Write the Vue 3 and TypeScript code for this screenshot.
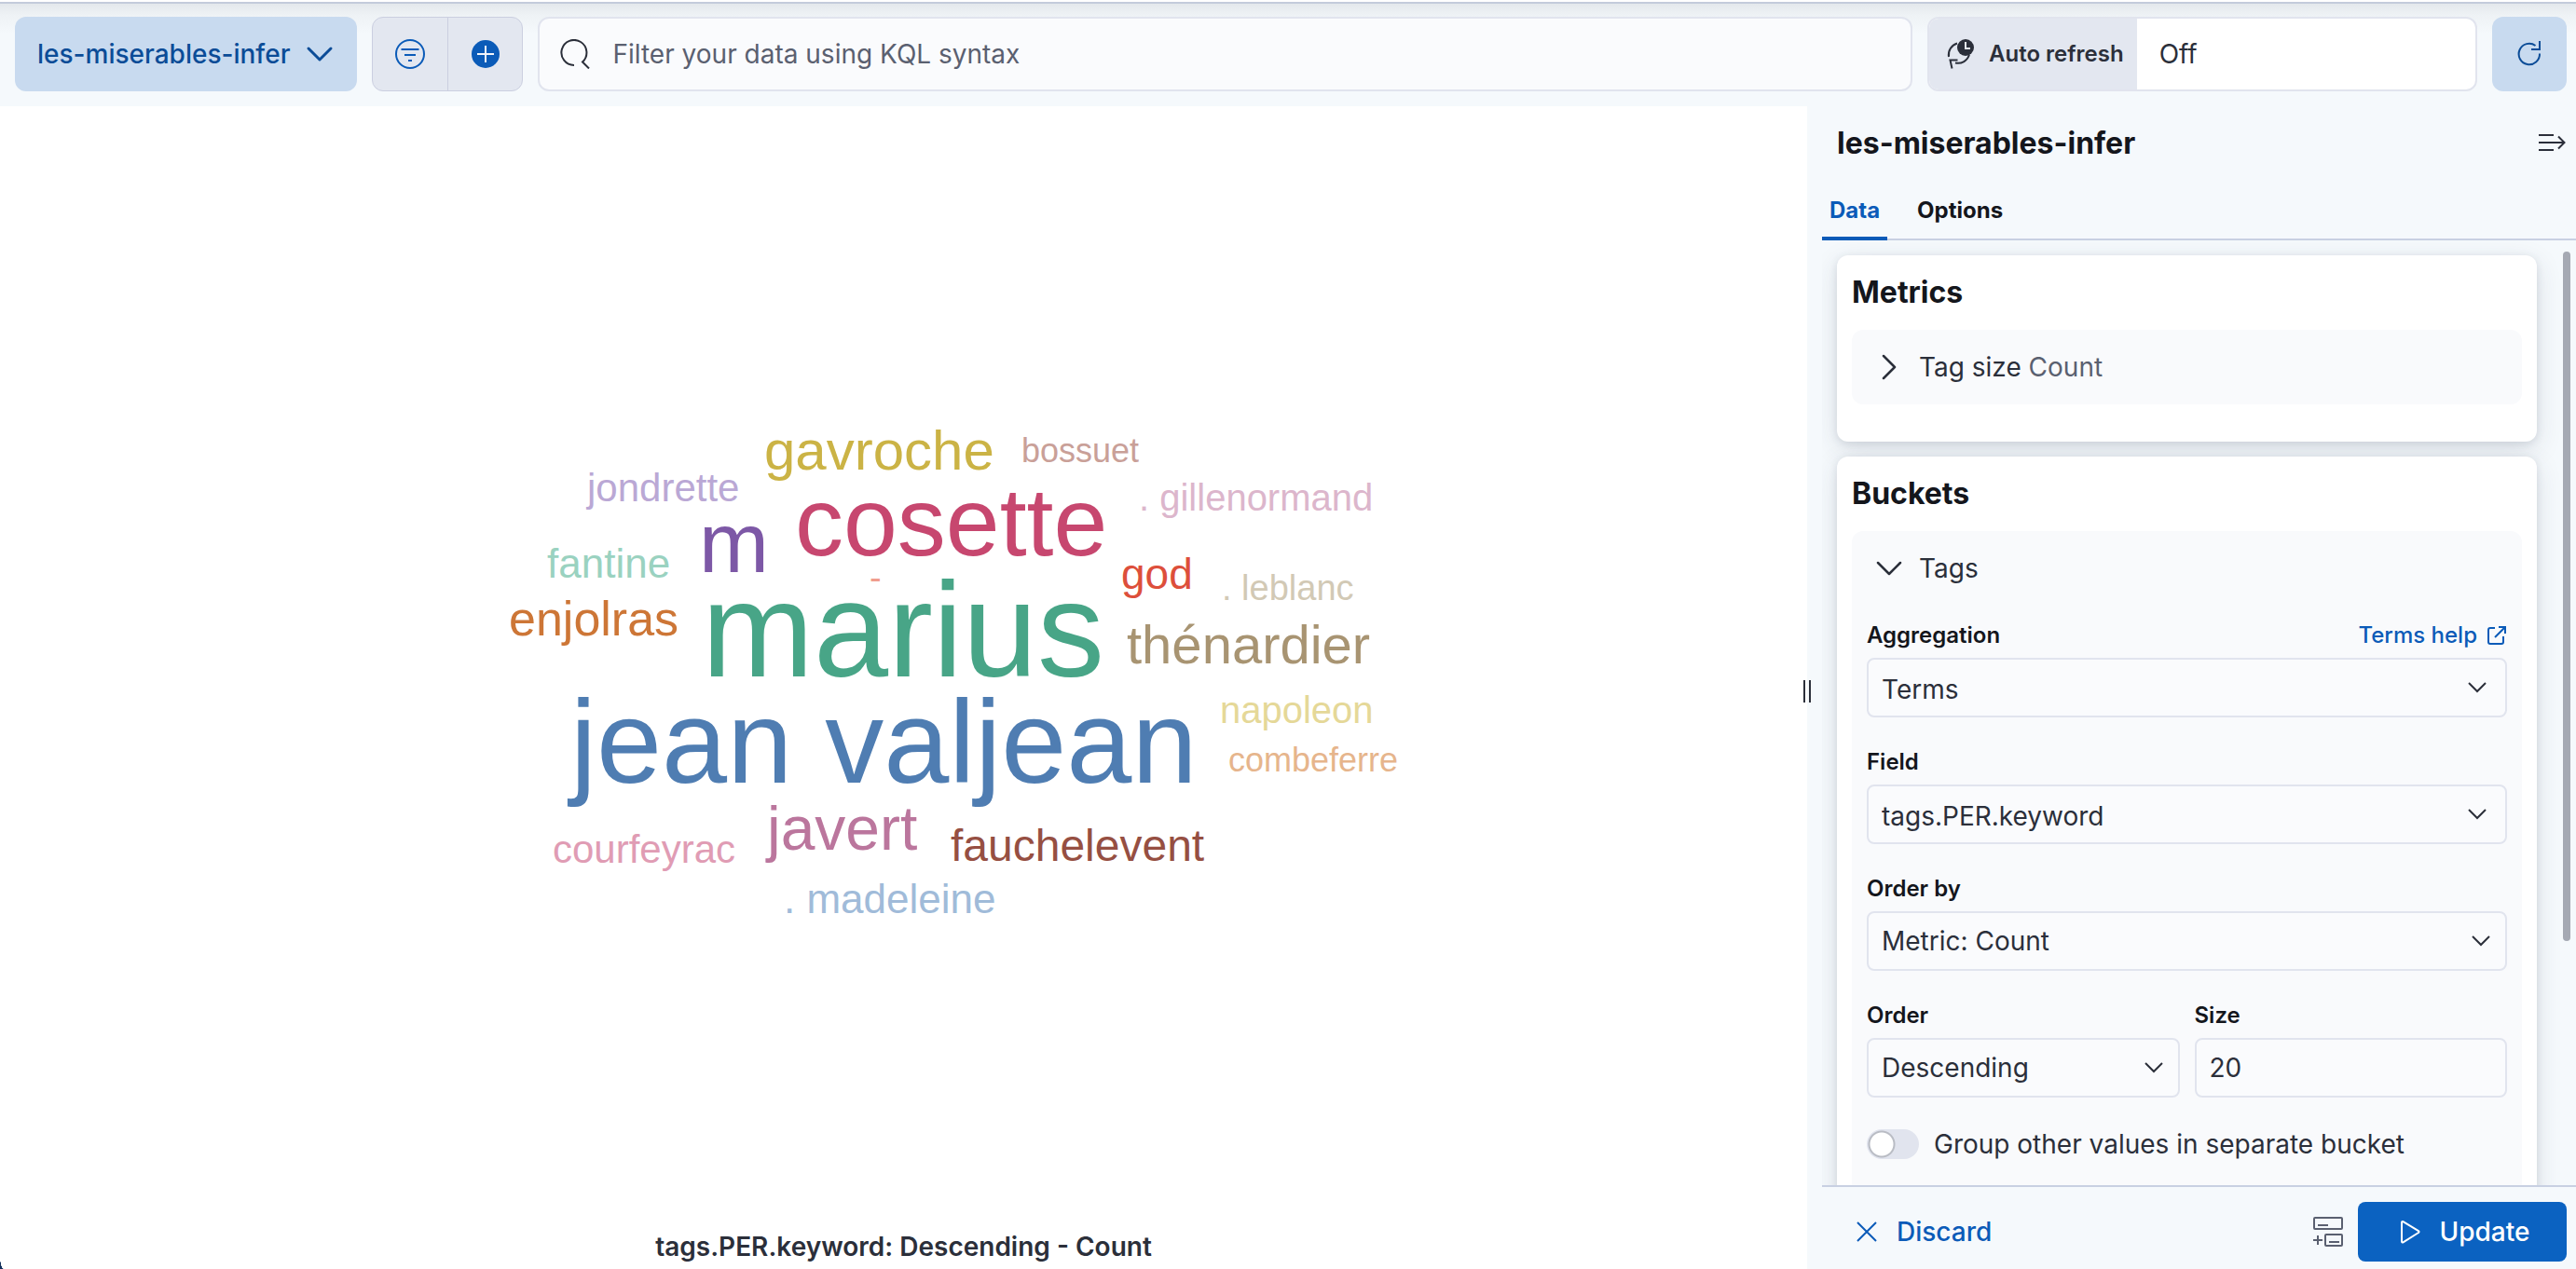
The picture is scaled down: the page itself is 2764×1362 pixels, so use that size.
<script setup lang="ts">
import { ref } from 'vue'

interface Word {
  text: string
  x: number
  y: number
  size: number
  color: string
}

const words: Word[] = [
  { text: 'marius', x: 323, y: 288, size: 144, color: '#48a587' },
  { text: 'jean valjean', x: 182, y: 402, size: 126, color: '#4f7db2' },
  { text: 'cosette', x: 423, y: 158, size: 104, color: '#c7476f' },
  { text: 'm', x: 320, y: 176, size: 90, color: '#7d58a6' },
  { text: 'javert', x: 393, y: 474, size: 66, color: '#bb769d' },
  { text: 'gavroche', x: 390, y: 66, size: 60, color: '#cbb345' },
  { text: 'thénardier', x: 779, y: 274, size: 58, color: '#a89472' },
  { text: 'enjolras', x: 116, y: 244, size: 52, color: '#cd7636' },
  { text: 'fauchelevent', x: 590, y: 486, size: 48, color: '#964f42' },
  { text: 'god', x: 773, y: 194, size: 46, color: '#dd4f3b' },
  { text: '. madeleine', x: 411, y: 542, size: 44, color: '#a0bbd9' },
  { text: 'fantine', x: 157, y: 182, size: 44, color: '#9ad2c0' },
  { text: 'courfeyrac', x: 163, y: 488, size: 42, color: '#e09cb4' },
  { text: 'jondrette', x: 200, y: 100, size: 42, color: '#baa8d5' },
  { text: '. gillenormand', x: 792, y: 110, size: 40, color: '#dcb6cc' },
  { text: 'napoleon', x: 879, y: 338, size: 40, color: '#e5d898' },
  { text: '. leblanc', x: 881, y: 206, size: 38, color: '#d2c9b5' },
  { text: '-', x: 503, y: 195, size: 38, color: '#f09d8e' },
  { text: 'bossuet', x: 666, y: 58, size: 36, color: '#c9a098' },
  { text: 'combeferre', x: 888, y: 390, size: 36, color: '#e6b58c' },
]

const query = ref('')
const interval = ref('Off')
const size = ref('20')
const groupOther = ref(false)
</script>

<template>
  <div class="app">
    <header class="toolbar">
      <button class="dataview" type="button">
        les-miserables-infer
        <svg width="32" height="32" viewBox="0 0 32 32" fill="none" stroke="currentColor" stroke-width="3" stroke-linecap="round" stroke-linejoin="round"><path d="M4 10l12 12 12-12" /></svg>
      </button>
      <div class="filter-group">
        <button type="button" aria-label="Saved query menu">
          <svg width="32" height="32" viewBox="0 0 32 32" fill="none" stroke="currentColor" stroke-width="2"><circle cx="16" cy="16" r="15" /><path d="M6.500 11h19M10 17h12M14 23h4" /></svg>
        </button>
        <button type="button" aria-label="Add filter">
          <svg width="30" height="30" viewBox="0 0 30 30"><circle cx="15" cy="15" r="15" fill="currentColor" /><path d="M15 6v18M6 15h18" stroke="#f2f5fa" stroke-width="2" /></svg>
        </button>
      </div>
      <label class="search">
        <svg width="32" height="32" viewBox="0 0 32 32" fill="none" stroke="currentColor" stroke-width="2"><path d="M15 28A13.500 13.500 0 1 1 24 24.500l7 7" /></svg>
        <input v-model="query" type="text" aria-label="Query" placeholder="Filter your data using KQL syntax" />
      </label>
      <div class="auto-refresh">
        <label for="interval">
          <svg width="32" height="32" viewBox="0 0 32 32" fill="none" stroke="currentColor" stroke-width="2"><path d="M12 4.500A13 13 0 0 0 3 19M12.500 22.500h-8l2 9M10 25.500A12.500 12.500 0 0 0 25 16.500" /><circle cx="21" cy="9" r="9" fill="currentColor" stroke="none" /><path d="M21 3v7h5" stroke="#e3e7f0" /></svg>
          Auto refresh
        </label>
        <input id="interval" v-model="interval" type="text" />
      </div>
      <button class="refresh" type="button" aria-label="Refresh">
        <svg width="32" height="32" viewBox="0 0 32 32" fill="none" stroke="currentColor" stroke-width="2"><path d="M22.500 7A11.200 11.200 0 1 0 27 15.500M27 2v9h-9" /></svg>
      </button>
    </header>

    <div class="body">
      <main class="viz">
        <div class="cloud">
          <svg viewBox="0 0 1080 560" role="img" aria-label="Tag cloud">
            <text v-for="w in words" :key="w.text" :x="w.x" :y="w.y" :font-size="w.size" :fill="w.color">{{ w.text }}</text>
          </svg>
        </div>
        <p class="caption">tags.PER.keyword: Descending - Count</p>
        <span class="corner"></span>
      </main>

      <aside class="sidebar">
        <span class="handle"></span>
        <div class="title-row">
          <h2>les-miserables-infer</h2>
          <button type="button" class="plain" aria-label="Collapse sidebar">
            <svg width="32" height="32" viewBox="0 0 32 32" fill="none" stroke="currentColor" stroke-width="2"><path d="M2 7h16M2 15h28M2 23h16M23 8.500l6.500 6.500-6.500 6.500" /></svg>
          </button>
        </div>
        <div class="tabs" role="tablist">
          <button type="button" role="tab" aria-selected="true" class="active">Data</button>
          <button type="button" role="tab" aria-selected="false">Options</button>
        </div>

        <div class="scroll">
          <section class="card metrics">
            <h3>Metrics</h3>
            <div class="group">
              <button type="button" class="accordion">
                <svg width="32" height="32" viewBox="0 0 32 32" fill="none" stroke="currentColor" stroke-width="2.500" stroke-linecap="round" stroke-linejoin="round"><path d="M10 4l12 12-12 12" /></svg>
                <span>Tag size <em>Count</em></span>
              </button>
            </div>
          </section>

          <section class="card">
            <h3>Buckets</h3>
            <div class="group">
              <button type="button" class="accordion">
                <svg width="32" height="32" viewBox="0 0 32 32" fill="none" stroke="currentColor" stroke-width="2.500" stroke-linecap="round" stroke-linejoin="round"><path d="M4 10l12 12 12-12" /></svg>
                <span>Tags</span>
              </button>
              <div class="form">
                <div class="field">
                  <div class="label-row">
                    <label for="agg">Aggregation</label>
                    <a href="#">Terms help
                      <svg width="24" height="24" viewBox="0 0 24 24" fill="none" stroke="currentColor" stroke-width="2"><path d="M11 4H6a2 2 0 0 0-2 2v13a2 2 0 0 0 2 2h12a2 2 0 0 0 2-2v-6M15 3h7v7M21.500 3.500 11 14" /></svg>
                    </a>
                  </div>
                  <div class="select combo">
                    <select id="agg"><option>Terms</option></select>
                    <svg width="24" height="24" viewBox="0 0 24 24"><path d="M3 7l9 9 9-9" /></svg>
                  </div>
                </div>
                <div class="field">
                  <div class="label-row"><label for="fld">Field</label></div>
                  <div class="select combo">
                    <select id="fld"><option>tags.PER.keyword</option></select>
                    <svg width="24" height="24" viewBox="0 0 24 24"><path d="M3 7l9 9 9-9" /></svg>
                  </div>
                </div>
                <div class="field">
                  <div class="label-row"><label for="orderby">Order by</label></div>
                  <div class="select">
                    <select id="orderby"><option>Metric: Count</option></select>
                    <svg width="24" height="24" viewBox="0 0 24 24"><path d="M3 7l9 9 9-9" /></svg>
                  </div>
                </div>
                <div class="pair">
                  <div class="field">
                    <div class="label-row"><label for="order">Order</label></div>
                    <div class="select">
                      <select id="order"><option>Descending</option></select>
                      <svg width="24" height="24" viewBox="0 0 24 24"><path d="M3 7l9 9 9-9" /></svg>
                    </div>
                  </div>
                  <div class="field">
                    <div class="label-row"><label for="size">Size</label></div>
                    <input id="size" v-model="size" type="text" />
                  </div>
                </div>
                <label class="switch">
                  <input v-model="groupOther" type="checkbox" role="switch" />
                  Group other values in separate bucket
                </label>
              </div>
            </div>
          </section>
          <span class="thumb"></span>
        </div>

        <footer class="actions">
          <button type="button" class="discard">
            <svg width="32" height="32" viewBox="0 0 32 32" fill="none" stroke="currentColor" stroke-width="2"><path d="M6 6l20 20M26 6 6 26" /></svg>
            Discard
          </button>
          <button type="button" class="plain auto-apply" aria-label="Auto apply">
            <svg width="32" height="32" viewBox="0 0 32 32" fill="none" stroke="currentColor" stroke-width="2"><rect x="1" y="1" width="30" height="12" rx="1" /><path d="M5 9h11M0 25h10M5 20v10M17 27h11" /><rect x="13" y="19" width="18" height="12" rx="1" /></svg>
          </button>
          <button type="button" class="update">
            <svg width="32" height="32" viewBox="0 0 32 32" fill="none" stroke="currentColor" stroke-width="2" stroke-linejoin="round"><path d="M7 6v20.500a1 1 0 0 0 1.500.900L25 17a1 1 0 0 0 0-1.800L8.500 5.100A1 1 0 0 0 7 6z" /></svg>
            Update
          </button>
        </footer>
      </aside>
    </div>
  </div>
</template>

<style>
body {
  margin: 0;
  background: #fff;
}
</style>

<style scoped>
* {
  box-sizing: border-box;
}
.app {
  height: 100vh;
  display: flex;
  flex-direction: column;
  overflow: hidden;
  font-family: Inter, "Liberation Sans", sans-serif;
  font-size: 28px;
  line-height: 40px;
  color: #2b2f3a;
}
button,
input,
select {
  font: inherit;
  color: inherit;
  margin: 0;
}
button {
  border: 0;
  background: none;
  padding: 0;
  display: flex;
  align-items: center;
  justify-content: center;
}
svg {
  flex: none;
}
h2,
h3,
p {
  margin: 0;
}
.toolbar {
  flex: none;
  display: flex;
  gap: 16px;
  margin-top: 2px;
  padding: 14px 10px 16px 16px;
  border-top: 2px solid #c3cbdb;
  background: linear-gradient(#e4e8ec, #eef2f5 12px, #f5f9fc 32px);
}
.toolbar > * {
  height: 80px;
  border-radius: 12px;
}
.dataview {
  gap: 16px;
  padding: 0 24px;
  font-weight: 500;
  color: #0b4c97;
  background: #c8daef;
}
.filter-group {
  display: flex;
  width: 162px;
  border: 1px solid #cbcfe0;
  background: #e3e7f0;
  color: #0b5bb8;
}
.filter-group button {
  flex: 1;
}
.filter-group button + button {
  border-left: 1px solid #cbcfe0;
}
.search {
  flex: 1;
  display: flex;
  align-items: center;
  gap: 24px;
  padding: 0 22px;
  border: 2px solid #e1e4ee;
  background: #fafbfd;
}
.search input {
  flex: 1;
  border: 0;
  padding: 0;
  background: none;
  outline: none;
}
.search input::placeholder {
  color: #5a6070;
  opacity: 1;
}
.auto-refresh {
  display: flex;
  width: 590px;
  border: 2px solid #e1e4ee;
  background: #fff;
  overflow: hidden;
}
.auto-refresh label {
  flex: none;
  display: flex;
  align-items: center;
  gap: 14px;
  padding: 0 14px 0 18px;
  font-size: 24px;
  font-weight: 600;
  background: #e3e7f0;
}
.auto-refresh input {
  flex: 1;
  min-width: 0;
  border: 0;
  padding: 0 24px;
  background: none;
}
.refresh {
  width: 80px;
  color: #0b4c97;
  background: #c8daef;
}
.body {
  flex: 1;
  min-height: 0;
  display: flex;
}
.viz {
  position: relative;
  flex: 1;
  min-width: 0;
  display: flex;
  flex-direction: column;
}
.cloud {
  flex: 1;
  min-height: 0;
  display: flex;
  align-items: center;
  justify-content: center;
}
.cloud svg {
  width: 1080px;
  max-width: 100%;
  flex: 0 1 auto;
  font-family: "Liberation Sans", Arial, sans-serif;
}
.caption {
  padding-bottom: 8px;
  line-height: 32px;
  font-size: 28px;
  font-weight: 600;
  text-align: center;
}
.corner {
  position: absolute;
  left: 0;
  bottom: 0;
  width: 4px;
  height: 14px;
  background: radial-gradient(ellipse at 100% 0, transparent 68%, #12305c 72%);
}
.sidebar {
  position: relative;
  flex: none;
  width: clamp(640px, 30vw, 825px);
  padding-left: 16px;
  display: flex;
  flex-direction: column;
  background: #f5f9fc;
}
.handle {
  position: absolute;
  left: -4px;
  top: 616px;
  width: 8px;
  height: 24px;
  border: solid #2b2f3a;
  border-width: 0 2px;
}
.title-row {
  flex: none;
  display: flex;
  justify-content: space-between;
  align-items: center;
  height: 80px;
  padding: 0 10px 0 16px;
}
h2,
h3 {
  font-size: 32px;
  line-height: 40px;
  font-weight: 700;
  color: #14161c;
}
.tabs {
  flex: none;
  display: flex;
  gap: 24px;
  height: 64px;
  border-bottom: 2px solid #c8d0e2;
}
.tabs button {
  height: 64px;
  padding: 0 8px;
  font-size: 24px;
  font-weight: 700;
  color: #14161c;
}
.tabs .active {
  color: #0b5bb8;
  border-bottom: 4px solid #0b5bb8;
  padding-top: 4px;
}
.scroll {
  position: relative;
  flex: 1;
  min-height: 0;
  overflow: hidden;
  padding: 16px 42px 16px 16px;
}
.thumb {
  position: absolute;
  right: 6px;
  top: 12px;
  width: 8px;
  height: 73%;
  border-radius: 4px;
  background: #a5a9b3;
}
.card {
  padding: 20px 16px 16px;
  border-radius: 12px;
  background: #fff;
  box-shadow: 0 2px 8px rgba(43, 57, 79, 0.12), 0 8px 28px rgba(43, 57, 79, 0.13);
}
.card + .card {
  margin-top: 16px;
}
.metrics {
  padding-bottom: 40px;
}
.group {
  margin-top: 20px;
  border-radius: 12px;
  background: #f9fafc;
}
.accordion {
  width: 100%;
  height: 80px;
  padding: 0 24px;
  gap: 16px;
  justify-content: flex-start;
}
.accordion em {
  font-style: normal;
  color: #5a6070;
}
.form {
  padding: 16px 16px 64px;
  display: flex;
  flex-direction: column;
  gap: 32px;
}
.label-row {
  display: flex;
  justify-content: space-between;
  height: 40px;
  line-height: 32px;
  font-size: 24px;
  font-weight: 600;
  color: #14161c;
}
.label-row a {
  display: flex;
  align-items: center;
  gap: 8px;
  height: 32px;
  font-weight: 500;
  color: #0b5bb8;
  text-decoration: none;
}
.select {
  position: relative;
}
.select svg {
  position: absolute;
  right: 16px;
  top: 20px;
  fill: none;
  stroke: #2b2f3a;
  stroke-width: 2;
  pointer-events: none;
}
.field select,
.field input {
  display: block;
  appearance: none;
  width: 100%;
  height: 64px;
  padding: 0 14px;
  border: 2px solid #e1e4ee;
  border-radius: 8px;
  background: #fafbfd;
}
.field .combo select {
  padding-top: 4px;
}
.combo svg {
  right: 20px;
}
.pair {
  display: grid;
  grid-template-columns: 1fr 1fr;
  gap: 16px;
}
.switch {
  display: flex;
  align-items: center;
  gap: 16px;
  height: 36px;
}
.switch input {
  appearance: none;
  width: 56px;
  height: 32px;
  border-radius: 16px;
  background: radial-gradient(circle at 16px 16px, #fff 12px, #b9bcc4 13px, #b9bcc4 14px, #e1e4ee 15px);
}
.actions {
  flex: none;
  display: flex;
  align-items: center;
  height: 90px;
  padding: 16px 10px 8px 32px;
  border-top: 2px solid #c8d0e2;
  font-weight: 500;
}
.discard {
  gap: 16px;
  color: #0b5bb8;
}
.auto-apply {
  margin-left: auto;
  color: #5a6070;
}
.update {
  height: 64px;
  width: 224px;
  margin-left: 16px;
  gap: 16px;
  border-radius: 8px;
  color: #fff;
  background: #0b62c1;
}
</style>
